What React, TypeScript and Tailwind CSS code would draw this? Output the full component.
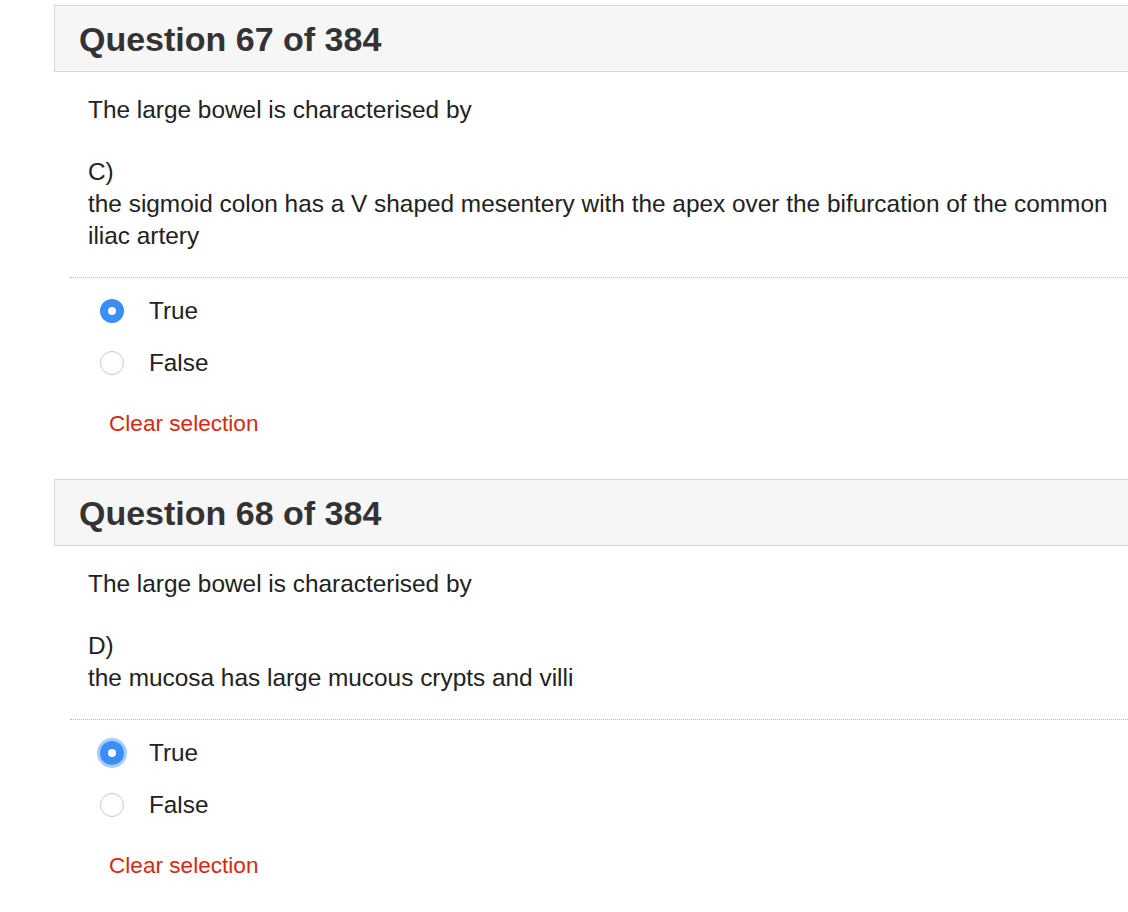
import React, { useState } from 'react';

type Q = {
  num: number;
  stem: string;
  letter: string;
  text: string;
  focused?: boolean;
};

const questions: Q[] = [
  {
    num: 67,
    stem: 'The large bowel is characterised by',
    letter: 'C)',
    text: 'the sigmoid colon has a V shaped mesentery with the apex over the bifurcation of the common iliac artery',
  },
  {
    num: 68,
    stem: 'The large bowel is characterised by',
    letter: 'D)',
    text: 'the mucosa has large mucous crypts and villi',
    focused: true,
  },
];

const Radio: React.FC<{ checked: boolean; focused?: boolean; label: string; onClick: () => void }> = ({
  checked,
  focused,
  label,
  onClick,
}) => (
  <button type="button" onClick={onClick} className="flex h-[52px] items-center pl-[30px] text-left">
    {checked ? (
      <span
        className={
          'flex h-[24px] w-[24px] items-center justify-center rounded-full bg-[#3a8ff7] ' +
          (focused ? 'shadow-[0_0_0_3px_rgba(58,143,247,0.45)]' : '')
        }
      >
        <span className="h-[8px] w-[8px] rounded-full bg-white" />
      </span>
    ) : (
      <span className="h-[24px] w-[24px] rounded-full border-[1.5px] border-[#c8c8c8] bg-white" />
    )}
    <span className="ml-[25px] text-[24.3px] leading-[32px] text-[#222]">{label}</span>
  </button>
);

const Question: React.FC<{ q: Q }> = ({ q }) => {
  const [value, setValue] = useState<'true' | 'false' | null>('true');

  return (
    <div className="ml-[54px]">
      <div className="flex h-[67px] items-center border-y border-l border-[#d6d6d6] bg-[#f6f6f6] pl-[24px]">
        <h2 className="text-[34px] font-bold leading-none text-[#333]">
          Question {q.num} of 384
        </h2>
      </div>
      <div className="pl-[16px]">
        <div className="pl-[18px] text-[24.4px] leading-[32px] text-[#222]">
          <p className="mt-[22px]">{q.stem}</p>
          <p className="mt-[30px]">{q.letter}</p>
          <p className="pr-[10px]">{q.text}</p>
        </div>
        <div className="mt-[25px] border-t border-dotted border-[#bdbdbd]" />
        <div className="mt-[7px] flex flex-col items-start">
          <Radio
            label="True"
            checked={value === 'true'}
            focused={q.focused}
            onClick={() => setValue('true')}
          />
          <Radio label="False" checked={value === 'false'} onClick={() => setValue('false')} />
        </div>
        <button
          type="button"
          onClick={() => setValue(null)}
          className="mt-[19px] pl-[39px] text-[22.6px] leading-[32px] text-[#d6290f]"
        >
          Clear selection
        </button>
      </div>
    </div>
  );
};

export default function App() {
  return (
    <div className="min-h-screen overflow-hidden bg-white pt-[5px] font-['Liberation_Sans',Arial,sans-serif]">
      <div className="flex flex-col gap-[39px]">
        {questions.map((q) => (
          <Question key={q.num} q={q} />
        ))}
      </div>
    </div>
  );
}
